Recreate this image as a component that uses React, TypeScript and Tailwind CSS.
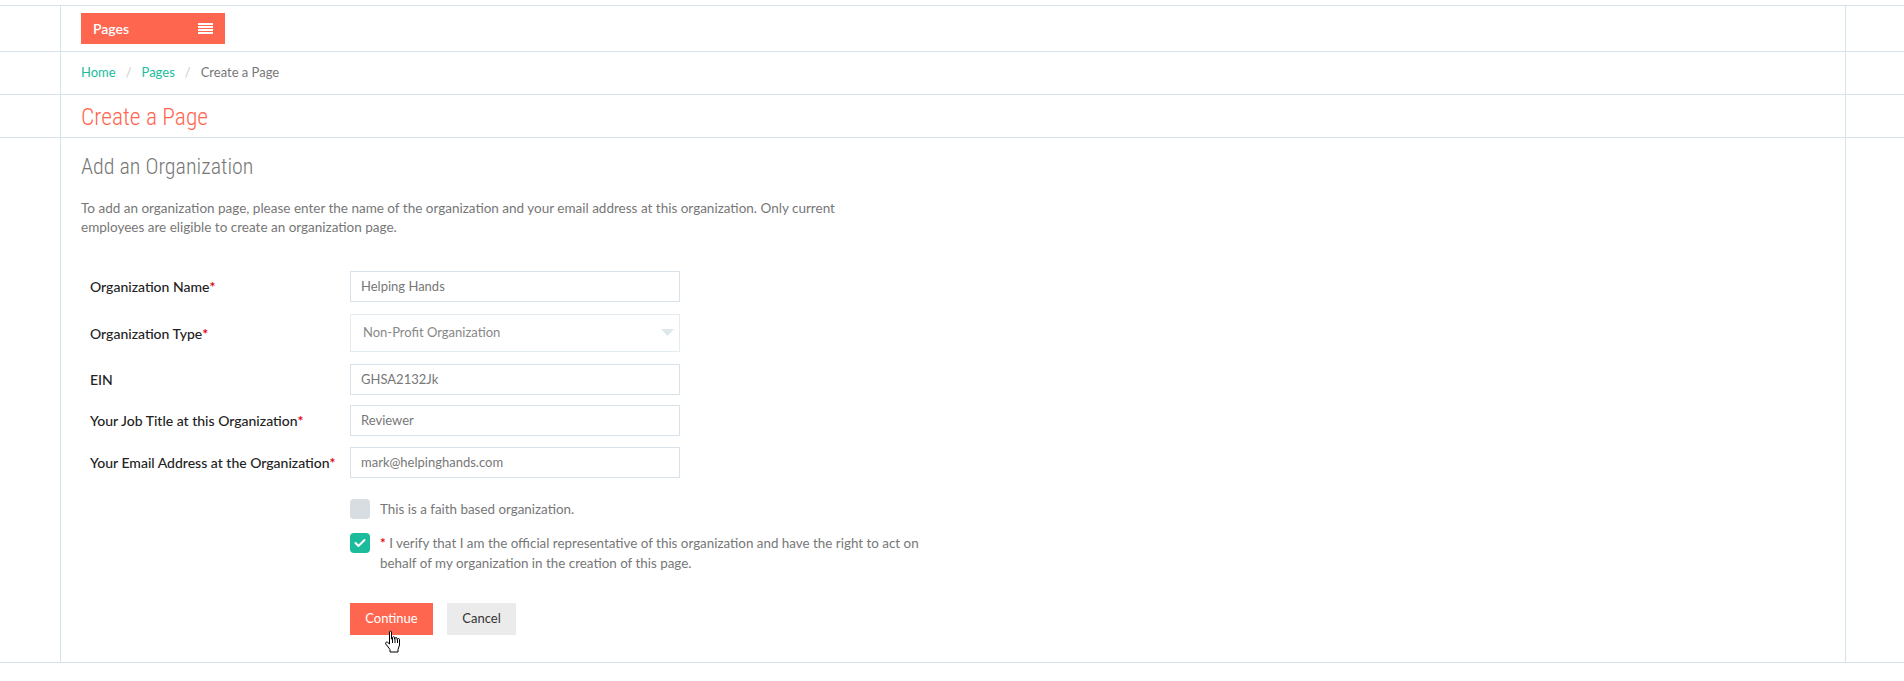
import React from "react";

const line = "border-[#d7e3ea]";

const Row = ({ children, h }: { children: React.ReactNode; h: string }) => (
  <div className={`border-b ${line}`}>
    <div className={`ml-[60px] mr-[58px] border-x ${line} px-[20px] ${h}`}>{children}</div>
  </div>
);

const Label = ({ text, req }: { text: string; req?: boolean }) => (
  <div className="w-[260px] shrink-0 text-[14px] font-medium text-[#222]">
    {text}
    {req && <span className="text-[#e4061a] font-bold">*</span>}
  </div>
);

const Input = ({ value }: { value: string }) => (
  <div className={`w-[330px] h-[31px] border ${line} flex items-center pl-[10px] text-[13px] text-[#777]`}>{value}</div>
);

const HandCursor = () => (
  <svg width="18" height="24" viewBox="0 0 18 24" className="absolute left-[384px] top-[630px]">
    <path
      d="M5.5 2 C5.5 0.8 7.5 0.8 7.5 2 V9 H8.5 V7.5 C8.5 6.5 10.5 6.5 10.5 7.5 V9 H11 V8.3 C11 7.3 13 7.3 13 8.3 V9.5 H13.5 V9.3 C13.5 8.3 15.5 8.3 15.5 9.3 V15 L14 19.5 V22 H6 V19.5 L1.8 14 C1 12.8 2.4 11.4 3.6 12.3 L5.5 14 Z"
      fill="#fff"
      stroke="#000"
      strokeWidth="1"
    />
    <path d="M8.5 9 V13 M11 9 V13 M13.5 9.5 V13" stroke="#000" strokeWidth="1" />
  </svg>
);

const condensed = { fontFamily: "'Roboto Condensed', 'Liberation Sans Narrow', 'DejaVu Sans Condensed', Roboto, sans-serif" };

export default function App() {
  return (
    <div className="relative min-h-[681px] bg-white pt-[5px]" style={{ fontFamily: "Lato, 'Open Sans', sans-serif" }}>
      <div className={`border-t ${line}`}>
        {/* Pages menu */}
        <Row h="h-[45px] flex items-center">
          <div className="w-[144px] h-[31px] bg-[#ff6650] flex items-center justify-between pl-[12px] pr-[12px]">
            <span className="text-white text-[14px] font-semibold">Pages</span>
            <span className="flex flex-col gap-[1px]">
              <span className="block w-[15px] h-[2px] bg-white" />
              <span className="block w-[15px] h-[2px] bg-white" />
              <span className="block w-[15px] h-[2px] bg-white" />
              <span className="block w-[15px] h-[2px] bg-white" />
            </span>
          </div>
        </Row>

        {/* Breadcrumb */}
        <Row h="h-[42px] flex items-center">
          <div className="flex items-center text-[13px]">
            <span className="text-[#1abc9c]">Home</span>
            <span className="text-[#ccc] px-[10px]">/</span>
            <span className="text-[#1abc9c]">Pages</span>
            <span className="text-[#ccc] px-[10px]">/</span>
            <span className="text-[#777]">Create a Page</span>
          </div>
        </Row>

        {/* Title */}
        <Row h="h-[42px] flex items-center">
          <h1 className="text-[23.5px] font-light text-[#ff6650] pt-[3px]" style={condensed}>
            Create a Page
          </h1>
        </Row>

        {/* Form */}
        <Row h="pt-[14px] pb-[27px]">
          <h2 className="h-[30px] leading-[30px] text-[22px] font-light text-[#777]" style={condensed}>
            Add an Organization
          </h2>
          <p className="mt-[17px] text-[13.5px] leading-[19px] text-[#777]">
            To add an organization page, please enter the name of the organization and your email address at this organization. Only current
            <br />
            employees are eligible to create an organization page.
          </p>

          <div className="mt-[34px] ml-[9px]">
            <div className="flex items-center">
              <Label text="Organization Name" req />
              <Input value="Helping Hands" />
            </div>
            <div className="flex items-center mt-[12px]">
              <Label text="Organization Type" req />
              <div className="w-[330px] h-[38px] border border-[#e3ecf0] flex items-center justify-between pl-[12px] pr-[5px] text-[13px] text-[#888]">
                <span>Non-Profit Organization</span>
                <svg width="13" height="8" viewBox="0 0 13 8">
                  <path d="M0 0 H13 L6.5 7 Z" fill="#dde7ec" />
                </svg>
              </div>
            </div>
            <div className="flex items-center mt-[12px]">
              <Label text="EIN" />
              <Input value="GHSA2132Jk" />
            </div>
            <div className="flex items-center mt-[10px]">
              <Label text="Your Job Title at this Organization" req />
              <Input value="Reviewer" />
            </div>
            <div className="flex items-center mt-[11px]">
              <Label text="Your Email Address at the Organization" req />
              <Input value="mark@helpinghands.com" />
            </div>

            <div className="ml-[260px] mt-[21px]">
              <div className="flex items-center gap-[10px]">
                <span className="w-[20px] h-[20px] rounded-[4px] bg-[#d8dde1]" />
                <span className="text-[13.4px] text-[#777]">This is a faith based organization.</span>
              </div>
              <div className="flex items-start gap-[10px] mt-[14px]">
                <span className="w-[20px] h-[20px] rounded-[4px] bg-[#1abc9c] flex items-center justify-center shrink-0">
                  <svg width="12" height="10" viewBox="0 0 12 10">
                    <path d="M1.5 5 L4.5 8 L10.5 2" fill="none" stroke="#fff" strokeWidth="2" strokeLinecap="round" strokeLinejoin="round" />
                  </svg>
                </span>
                <span className="text-[13.4px] leading-[20px] text-[#777] w-[580px]">
                  <span className="text-[#e4061a] font-bold">*</span> I verify that I am the official representative of this organization and have the right to act on
                  <br />
                  behalf of my organization in the creation of this page.
                </span>
              </div>
              <div className="flex gap-[14px] mt-[30px]">
                <button className="w-[83px] h-[32px] bg-[#ff6650] text-white text-[13px]">Continue</button>
                <button className="w-[69px] h-[32px] bg-[#ebebeb] text-[#333] text-[13px]">Cancel</button>
              </div>
            </div>
          </div>
        </Row>
      </div>
      <HandCursor />
    </div>
  );
}
